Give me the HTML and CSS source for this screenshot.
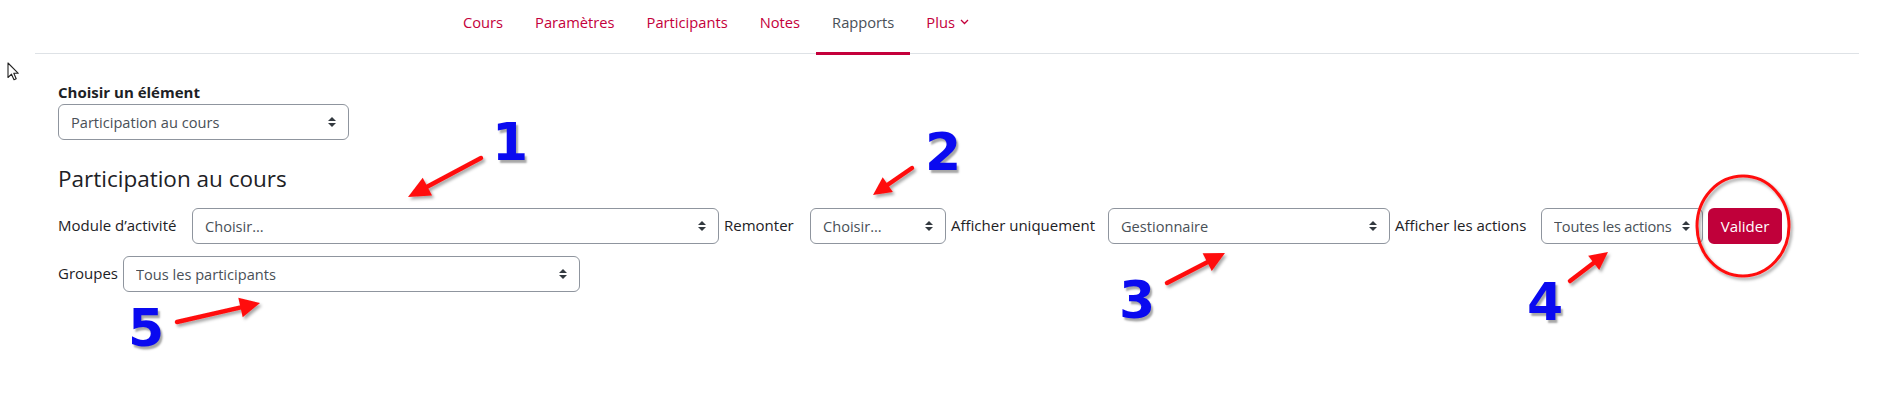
FILE: index.html
```html
<!DOCTYPE html>
<html lang="fr">
<head>
<meta charset="utf-8">
<title>Participation au cours</title>
<link rel="stylesheet" href="styles.css">
</head>
<body>
<svg class="cursor" width="13" height="19" viewBox="0 0 13 19" aria-hidden="true">
  <path d="M1 1 L1 15.5 L4.5 12.2 L7 17.8 L9.2 16.8 L6.8 11.3 L11.3 11.3 Z" fill="#fff" stroke="#222" stroke-width="1.1" stroke-linejoin="round"/>
</svg>

<header class="topnav">
  <nav class="tabs">
    <a class="tab" href="#">Cours</a>
    <a class="tab" href="#">Paramètres</a>
    <a class="tab" href="#">Participants</a>
    <a class="tab" href="#">Notes</a>
    <a class="tab active" href="#">Rapports</a>
    <a class="tab" href="#">Plus<svg class="chev" width="9" height="6" viewBox="0 0 9 6"><path d="M1 1 L4.5 4.5 L8 1" fill="none" stroke="currentColor" stroke-width="1.3"/></svg></a>
  </nav>
</header>

<main class="content">
  <form class="chooser">
    <label class="chooser-label" for="jump">Choisir un élément</label>
    <select id="jump" class="sel sel-jump"><option>Participation au cours</option></select>
  </form>

  <h3 class="title">Participation au cours</h3>

  <form class="filters">
    <div class="filter-row">
      <label class="flabel w-module">Module d’activité</label>
      <select class="sel sel-module"><option>Choisir…</option></select>
      <label class="flabel w-remonter">Remonter</label>
      <select class="sel sel-remonter"><option>Choisir…</option></select>
      <label class="flabel w-afficher">Afficher uniquement</label>
      <select class="sel sel-role"><option>Gestionnaire</option></select>
      <label class="flabel w-actions">Afficher les actions</label>
      <select class="sel sel-actions"><option>Toutes les actions</option></select>
      <button type="button" class="btn-primary">Valider</button>
    </div>
    <div class="filter-row">
      <label class="flabel flabel-tight w-groups">Groupes</label>
      <select class="sel sel-groups"><option>Tous les participants</option></select>
    </div>
  </form>
</main>

<div class="annotations" aria-hidden="true">
  <svg class="marks" width="1890" height="406" viewBox="0 0 1890 406">
    <defs>
      <filter id="sh" x="-30%" y="-30%" width="160%" height="160%">
        <feDropShadow dx="2" dy="2.5" stdDeviation="1.4" flood-color="#000" flood-opacity="0.35"/>
      </filter>
    </defs>
    <g filter="url(#sh)" fill="#ff0f0f" stroke="#ff0f0f" stroke-linecap="round">
      <line x1="481" y1="158" x2="421" y2="190" stroke-width="4.5"/>
      <polygon points="408,197 422.7,177.8 432.1,195.4" stroke="none"/>

      <line x1="912" y1="168" x2="883" y2="188" stroke-width="4.5"/>
      <polygon points="873,195 882.7,177.3 892.9,192.1" stroke="none"/>

      <line x1="1167" y1="283" x2="1212.6" y2="259.4" stroke-width="4.5"/>
      <polygon points="1225,253 1211.8,271.1 1202.6,253.3" stroke="none"/>

      <line x1="1570" y1="281" x2="1598.5" y2="259.3" stroke-width="4.5"/>
      <polygon points="1608,252 1599.2,270.1 1588.2,255.7" stroke="none"/>

      <line x1="177" y1="322" x2="246.4" y2="306.1" stroke-width="4.5"/>
      <polygon points="260,303 242.7,317.2 238.3,297.8" stroke="none"/>
    </g>
    <ellipse cx="1743" cy="226" rx="46" ry="50" fill="none" stroke="#ff1010" stroke-width="3" filter="url(#sh)"/>
  </svg>
  <span class="num n1">1</span>
  <span class="num n2">2</span>
  <span class="num n3">3</span>
  <span class="num n4">4</span>
  <span class="num n5">5</span>
</div>
</body>
</html>
```

FILE: styles.css
```css
* { box-sizing: border-box; }

html, body {
  margin: 0;
  padding: 0;
  background: #fff;
}

body {
  position: relative;
  width: 1890px;
  height: 406px;
  overflow: hidden;
  font-family: "Open Sans", "Noto Sans", sans-serif;
  font-size: 15px;
  line-height: 1.5;
  color: #1d2125;
}

.cursor {
  position: absolute;
  left: 7px;
  top: 62px;
}

/* ---------- top navigation ---------- */
.topnav {
  margin: 0 31px 0 35px;
  height: 54px;
  border-bottom: 1px solid #dee2e6;
}

.tabs {
  display: flex;
  align-items: flex-start;
  height: 53px;
  padding-left: 412px;
}

.tab {
  display: flex;
  align-items: center;
  gap: 5px;
  height: 55px;
  padding: 0 16px 9px;
  border-bottom: 3px solid transparent;
  color: #c4003b;
  text-decoration: none;
  font-size: 14.7px;
  line-height: 22px;
  white-space: nowrap;
}

.tab.active {
  color: #495057;
  border-bottom-color: #c4003b;
}

.chev { margin-top: 1px; }

/* ---------- content ---------- */
.content {
  padding: 27px 0 0 58px;
}

.chooser-label {
  display: block;
  font-weight: 700;
  line-height: 22px;
  margin-bottom: 1px;
}

.sel {
  -webkit-appearance: none;
  appearance: none;
  display: block;
  height: 36px;
  padding: 0 26px 0 12px;
  font-family: inherit;
  font-size: 14.6px;
  line-height: 34px;
  color: #495057;
  background-color: #fff;
  background-image: url("data:image/svg+xml,%3csvg xmlns='http://www.w3.org/2000/svg' viewBox='0 0 4 5'%3e%3cpath fill='%23343a40' d='M2 0L0 2h4zm0 5L0 3h4z'/%3e%3c/svg%3e");
  background-repeat: no-repeat;
  background-position: right 12px center;
  background-size: 8px 10px;
  border: 1px solid #8f959e;
  border-radius: 6px;
}

.sel-jump { width: 291px; }

.title {
  margin: 25px 0 16px;
  font-size: 22.5px;
  font-weight: 400;
  line-height: 27px;
  color: #1d2125;
}

.filters {
  display: flex;
  flex-direction: column;
  gap: 12px;
}

.filter-row {
  display: flex;
  align-items: center;
}

.flabel {
  margin: 0 16px 3px 0;
  white-space: nowrap;
  line-height: 22px;
}

.flabel-tight { margin-right: 9px; }

.w-module { width: 118px; }
.w-remonter { width: 70px; }
.w-afficher { width: 141px; }
.w-actions { width: 130px; }
.w-groups { width: 56px; }

.filter-row .sel { margin-right: 5px; }

.sel-module { width: 527px; }
.sel-remonter { width: 136px; }
.sel-role { width: 282px; }
.sel-actions { width: 162px; letter-spacing: -0.2px; }
.sel-groups { width: 457px; }

.btn-primary {
  width: 74px;
  height: 36px;
  padding: 0;
  border: 0;
  border-radius: 6px;
  background: #c0003a;
  color: #fff;
  font-family: inherit;
  font-size: 15px;
}

/* ---------- annotations overlay ---------- */
.annotations {
  position: absolute;
  left: 0;
  top: 0;
  width: 1890px;
  height: 406px;
  pointer-events: none;
}

.marks {
  position: absolute;
  left: 0;
  top: 0;
}

.num {
  position: absolute;
  font-family: "DejaVu Sans", sans-serif;
  font-weight: 700;
  font-size: 52px;
  line-height: 1;
  color: #0a0af0;
  text-shadow: 2px 3px 2px rgba(0, 0, 0, 0.35);
}

.n1 { left: 492px; top: 116px; }
.n2 { left: 925px; top: 126px; }
.n3 { left: 1119px; top: 274px; }
.n4 { left: 1527px; top: 276px; }
.n5 { left: 128px; top: 302px; }
```
